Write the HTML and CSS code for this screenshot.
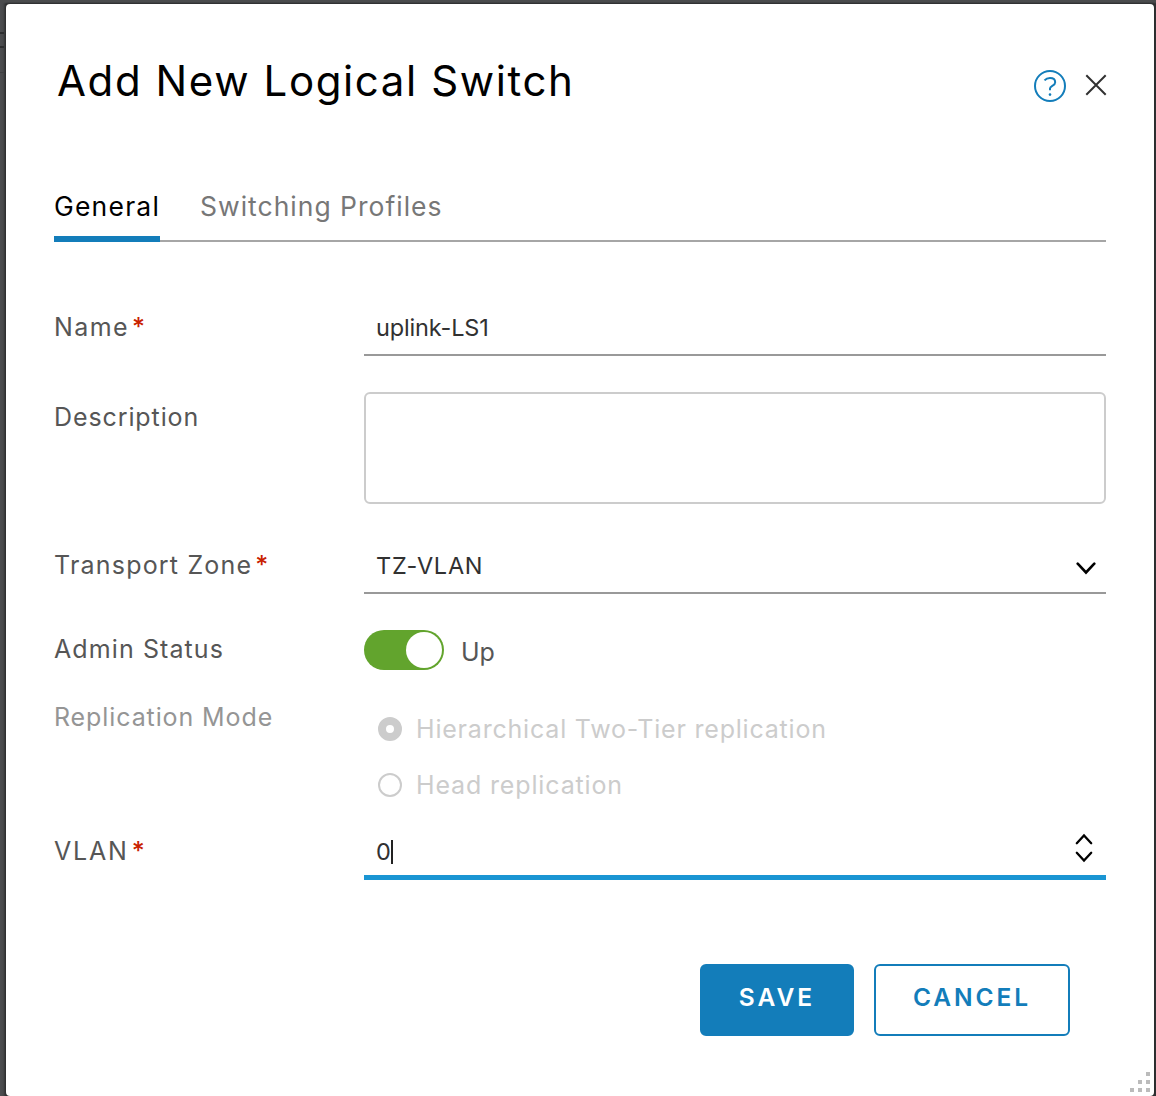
FILE: index.html
```html
<!DOCTYPE html>
<html lang="en">
<head>
<meta charset="utf-8">
<title>Add New Logical Switch</title>
<link rel="stylesheet" href="styles.css">
</head>
<body>
<main class="dialog">
  <header class="header">
    <h1 class="title"><span>Add New Logical Switch</span></h1>
    <div class="actions">
      <svg class="help" width="32" height="32" viewBox="0 0 32 32" fill="none" stroke="currentColor" stroke-width="2"><circle cx="16" cy="16" r="15"/><path d="M10.500 10.300C12 8.600 14 8 16 8c3.200 0 5.200 1.700 5.200 4.200 0 3.800-5.200 3.600-5.200 6.400v1.700"/><circle cx="16" cy="24.600" r="1.300" fill="currentColor" stroke="none"/></svg>
      <svg class="close" width="22" height="22" viewBox="0 0 22 22" fill="none" stroke="currentColor" stroke-width="2"><path d="M1.300 1.300l19.400 19.400M20.700 1.300L1.300 20.700"/></svg>
    </div>
  </header>
  <nav class="tabs">
    <a class="tab active"><span class="general">General</span></a>
    <a class="tab"><span class="profiles">Switching Profiles</span></a>
  </nav>
  <form class="form">
    <div class="row name">
      <label class="label"><span class="t-name">Name</span><b class="star">*</b></label>
      <div class="field"><span class="value name-value">uplink-LS1</span></div>
    </div>
    <div class="row description">
      <label class="label"><span class="t-desc">Description</span></label>
      <div class="textarea"></div>
    </div>
    <div class="row zone">
      <label class="label"><span class="t-zone">Transport Zone</span><b class="star">*</b></label>
      <div class="field"><span class="value zone-value">TZ-VLAN</span>
        <svg class="chevron" width="20" height="13" viewBox="0 0 20 13" fill="none" stroke="currentColor" stroke-width="2.600" stroke-linecap="round"><path d="M1.700 1.700L10 10.500l8.300-8.800"/></svg>
      </div>
    </div>
    <div class="row status">
      <label class="label"><span class="t-admin">Admin Status</span></label>
      <div class="switch"><span class="toggle"><i class="knob"></i></span><span class="up">Up</span></div>
    </div>
    <div class="row replication">
      <label class="label muted"><span class="t-rep">Replication Mode</span></label>
      <div class="radios">
        <div class="radio"><i class="dot checked"></i><span class="t-hier">Hierarchical Two-Tier replication</span></div>
        <div class="radio"><i class="dot"></i><span class="t-head">Head replication</span></div>
      </div>
    </div>
    <div class="row vlan">
      <label class="label"><span class="t-vlan">VLAN</span><b class="star">*</b></label>
      <div class="field focused"><span class="value zero">0</span><i class="caret"></i>
        <svg class="stepper" width="18" height="30" viewBox="0 0 18 30" fill="none" stroke="currentColor" stroke-width="2.300" stroke-linecap="round"><path d="M1.800 10.200L9 2.500l7.200 7.700M1.800 19.800L9 27.500l7.200-7.700"/></svg>
      </div>
    </div>
  </form>
  <footer class="footer">
    <button class="button primary"><span>SAVE</span></button>
    <button class="button outline"><span>CANCEL</span></button>
  </footer>
  <svg class="grip" width="22" height="22" viewBox="0 0 22 22" fill="currentColor"><path d="M17 1h4v4h-4zM9 9h4v4H9zM17 9h4v4h-4zM1 17h4v4H1zM9 17h4v4H9zM17 17h4v4h-4z"/></svg>
</main>
</body>
</html>
```
FILE: styles.css
```css
* { box-sizing: border-box; }
body {
  margin: 0;
  height: 1096px;
  overflow: hidden;
  padding: 4px 2px 0 6px;
  background:
    linear-gradient(#2c2d2f, #2c2d2f) 0 32px / 4px 2px no-repeat,
    linear-gradient(#2c2d2f, #2c2d2f) 0 46px / 4px 2px no-repeat,
    linear-gradient(#3e3f41, #3e3f41) 0 72px / 4px 1px no-repeat,
    linear-gradient(#4a4b4d 0, #4a4b4d 2px, transparent 4px),
    linear-gradient(90deg, #4c4d50 0, #48494b 3px, #303133 6px, #303133 100%);
  font-family: Inter, "Open Sans", sans-serif;
  font-weight: 400;
  color: #565656;
}
.dialog {
  position: relative;
  height: 1092px;
  padding: 0 48px;
  background: #fff;
  border-radius: 4px;
  box-shadow: 0 0 2px #222;
}
.header {
  display: flex;
  justify-content: space-between;
  height: 168px;
  padding-top: 47px;
}
.title {
  margin: 0 0 0 3px;
  font-size: 42px;
  line-height: 60px;
  font-weight: 400;
  color: #000;
  white-space: nowrap;
}
.actions { display: flex; gap: 19px; padding-top: 19px; margin-right: -1px; }
.help { color: #137dba; }
.close { color: #313131; margin-top: 4px; }
.tabs {
  display: flex;
  gap: 40px;
  height: 70px;
  box-shadow: inset 0 -2px #a6a6a6;
}
.tab {
  height: 70px;
  font-size: 26.500px;
  line-height: 69px;
  color: #777;
  white-space: nowrap;
}
.tab.active { width: 106px; color: #000; box-shadow: inset 0 -6px #137dba; }
.row { display: grid; grid-template-columns: 310px 1fr; }
.label { font-size: 25px; line-height: 40px; white-space: nowrap; }
.star { margin-left: 3px; font-weight: 500; color: #c92100; }
.muted { color: #959595; }
.field {
  display: flex;
  align-items: center;
  height: 56px;
  padding: 0 10px 0 12px;
  border-bottom: 2px solid #999;
  color: #313131;
}
.value { margin-top: 2px; font-size: 23.500px; line-height: 40px; }
.chevron, .stepper { margin-left: auto; color: #000; }
.name { height: 56px; padding-top: 58px; box-sizing: content-box; }
.name .label { padding-top: 7px; }
.description { margin-top: 36px; }
.description .label { padding-top: 5px; }
.textarea { height: 112px; border: 2px solid #ccc; border-radius: 6px; }
.zone { margin-top: 34px; }
.zone .label { padding-top: 7px; }
.zone .chevron { margin-top: 6px; }
.status { height: 68px; margin-top: 36px; }
.status .label, .replication > .label { margin-top: -1px; }
.switch { display: flex; height: 40px; }
.toggle { width: 80px; height: 40px; padding: 2px; border-radius: 20px; background: #62a42d; }
.knob { display: block; width: 36px; height: 36px; margin-left: 40px; border-radius: 50%; background: #fff; }
.up { margin: 2px 0 0 17px; font-size: 25px; line-height: 40px; }
.radios { padding: 11px 0 0 14px; }
.radio {
  display: flex;
  align-items: center;
  gap: 14px;
  height: 40px;
  margin-bottom: 16px;
  font-size: 25px;
  color: #ccc;
  white-space: nowrap;
}
.dot { width: 24px; height: 24px; border: 2px solid #ccc; border-radius: 50%; }
.checked { border-width: 8px; }
.vlan { margin-top: 3px; }
.vlan .label { padding-top: 7px; }
.focused { height: 56px; padding-right: 13px; border-bottom: 5px solid #1a95d3; }
.focused .value { margin-top: 5px; }
.caret { width: 2px; height: 24px; margin: 5px 0 0 0; background: #222; }
.stepper { margin-top: -3px; }
.footer { display: flex; justify-content: flex-end; gap: 20px; margin: 84px 36px 0 0; }
.button {
  height: 72px;
  padding: 0 0 6px;
  border: 2px solid #137dba;
  border-radius: 6px;
  font: 600 24.500px/60px Inter, sans-serif;
}
.primary { width: 154px; background: #137dba; color: #fff; letter-spacing: 3px; }
.outline { width: 196px; background: #fff; color: #137dba; letter-spacing: 2.900px; }
.grip { position: absolute; right: 3px; bottom: 3px; color: #bbb; }

/* tracking */
.title { letter-spacing: 1.600px; }
.general { letter-spacing: 1.200px; }
.profiles { letter-spacing: 1px; }
.t-name { letter-spacing: 1.400px; }
.t-desc { letter-spacing: .9px; }
.t-zone { letter-spacing: 1.200px; }
.t-admin { letter-spacing: 1.100px; }
.t-rep { letter-spacing: .9px; }
.t-hier { letter-spacing: .8px; }
.t-head { letter-spacing: .85px; }
.t-vlan { letter-spacing: 1.800px; }
.name-value { letter-spacing: -.15px; }
.zone-value { letter-spacing: .75px; }
.zero { letter-spacing: .6px; }
```
